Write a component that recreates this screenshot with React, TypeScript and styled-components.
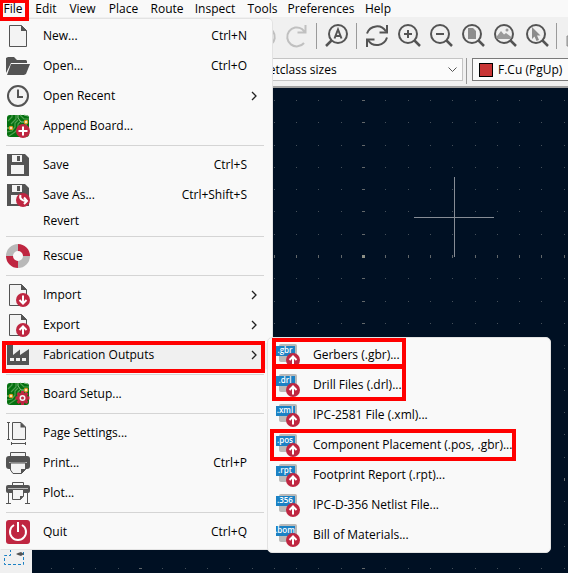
import React from "react";
import styled, { createGlobalStyle } from "styled-components";

const INK = "#545454";
const RED = "#bf2641";
const BLUE = "#1a81c4";
const GREY = "#b9b9b9";
const PAPER = "#f3f3f3";

const GlobalStyle = createGlobalStyle`
  html, body, #root { height: 100%; }
  body { margin: 0; overflow: hidden; }
  *, *::before, *::after { box-sizing: border-box; }
  body, button, select {
    font-family: "Open Sans", "Noto Sans", sans-serif;
    font-size: 12px;
    line-height: 16px;
    color: #000;
  }
  svg { display: block; flex: none; }
`;

const Window = styled.div`
  position: relative;
  display: flex;
  flex-direction: column;
  height: 100vh;
  background: #f0f0f0;
`;

const MenuBar = styled.nav`
  display: flex;
  height: 17px;
  background: #f9f9f9;
`;

const MenuBarItem = styled.button<{ $width: number }>`
  position: relative;
  flex: none;
  width: ${(p) => p.$width}px;
  padding: 0;
  border: 0;
  background: none;
  text-align: center;
  white-space: nowrap;
`;

const Toolbar = styled.div`
  display: flex;
  align-items: center;
  height: 38px;
  padding-left: 249px;
  overflow: hidden;
`;

const ToolButton = styled.button`
  display: flex;
  flex: none;
  align-items: center;
  justify-content: center;
  width: 32px;
  height: 32px;
  padding: 0;
  border: 0;
  background: none;
`;

const ToolSeparator = styled.span`
  flex: none;
  width: 1px;
  height: 26px;
  margin: 0 4px 0 3px;
  background: #9a9a9a;
`;

const OptionsBar = styled.div`
  display: flex;
  align-items: flex-start;
  height: 33px;
  padding: 3px 0 0 195px;
  border-bottom: 2px solid #a0a0a0;
  overflow: hidden;
`;

const SelectBox = styled.label<{ $width: number; $border: string }>`
  display: flex;
  flex: none;
  align-items: center;
  gap: 5px;
  width: ${(p) => p.$width}px;
  height: 23px;
  padding: 0 5px 0 6px;
  border: 1px solid ${(p) => p.$border};
  background: #fbfbfb;
`;

const LayerBox = styled(SelectBox)`
  margin-left: 1px;
`;

const PlainSelect = styled.select`
  flex: 1;
  min-width: 0;
  padding: 0;
  border: 0;
  appearance: none;
  background: none;
`;

const Swatch = styled.span`
  flex: none;
  width: 14px;
  height: 14px;
  border: 1px solid #000;
  background: #c83434;
`;

const Workspace = styled.div`
  display: flex;
  flex: 1;
  min-height: 0;
`;

const SideBar = styled.aside`
  display: flex;
  flex-direction: column;
  justify-content: flex-end;
  flex: none;
  width: 32px;
  padding: 0 4px 3px;
`;

const SideButton = styled.button`
  padding: 0;
  border: 0;
  background: none;
`;

const BoardCanvas = styled.main`
  flex: 1;
  min-width: 0;
  background: #001023;
`;

const Menu = styled.div<{ $left: number; $top: number; $width: number }>`
  position: absolute;
  left: ${(p) => p.$left}px;
  top: ${(p) => p.$top}px;
  width: ${(p) => p.$width}px;
  padding: 2px 0;
  border: 1px solid #e3e3e3;
  border-radius: 5px;
  background: #f9f9f9;
`;

const FlushMenu = styled(Menu)`
  border-left-color: #f9f9f9;
  border-radius: 0 5px 0 0;
`;

const MenuItem = styled.button<{ $short?: boolean; $active?: boolean; $inset: number }>`
  position: relative;
  display: flex;
  align-items: center;
  width: 100%;
  height: ${(p) => (p.$short ? 22 : 30)}px;
  padding: 0 25px 0 ${(p) => p.$inset}px;
  border: 0;
  background: ${(p) => (p.$active ? "linear-gradient(#f0f0f0, #f0f0f0) 5px 3px / calc(100% - 9px) 26px no-repeat" : "none")};
  text-align: left;
  white-space: nowrap;
`;

const IconSlot = styled.span`
  flex: none;
  width: 24px;
  height: 24px;
  margin-right: 13px;
`;

const Label = styled.span`
  flex: 1;
`;

const Arrow = styled.svg`
  margin-right: -10px;
`;

const Divider = styled.hr`
  height: 1px;
  margin: 4px 8px 4px 5px;
  border: 0;
  background: #d5d5d5;
`;

const Marker = styled.span<{ $left: number; $top: number; $width: number; $height: number }>`
  position: absolute;
  z-index: 1;
  left: ${(p) => p.$left}px;
  top: ${(p) => p.$top}px;
  width: ${(p) => p.$width}px;
  height: ${(p) => p.$height}px;
  border: 4px solid #f00;
  pointer-events: none;
`;

const TitleMarker = styled(Marker)`
  border-width: 3px 4px 4px 3px;
`;

const Icon = ({ children }: { children: React.ReactNode }) => (
  <svg width="24" height="24" viewBox="0 0 24 24" fill="none" aria-hidden="true">
    {children}
  </svg>
);

const Badge = ({ d }: { d: string }) => (
  <g transform="translate(17 17)">
    <circle r="7" fill={RED} />
    <path d={d} stroke="#fff" strokeWidth="2" />
  </g>
);

const UP = "M0 4.5V-3M-3.5 0L0-3.6L3.5 0";
const DOWN = "M0-4.5V3M-3.5 0L0 3.6L3.5 0";

const Page = () => (
  <>
    <path d="M3.5 1.5H15.5L20.5 6.5V22.5H3.5Z" fill={PAPER} stroke={INK} />
    <path d="M15 1L21 7H15Z" fill={INK} />
  </>
);

const Board = () => (
  <>
    <rect x="1" y="1" width="22" height="22" rx="3" fill="#04700f" />
    <path d="M6 1V3L2 7M10 1V5L5 10M14 1L18 5H23M1 18L6 17L9 13V9L12 6M3 22L9 18L12 14V10L14 8" stroke="#4f9f50" strokeWidth="1.2" />
    <path d="M12 1V4L15 8H19M1 14H5M20 10V16M22 2L18 1" stroke="#8cc48a" />
    <circle cx="5" cy="14" r="1.6" fill="#fff" stroke="#dd9a23" strokeWidth="1.4" />
    <circle cx="20" cy="8" r="1.6" fill="#fff" stroke="#dd9a23" strokeWidth="1.4" />
  </>
);

const Floppy = () => (
  <>
    <path d="M1 1H19L23 5V23H1Z" fill={INK} />
    <path d="M6 2H16V9H6Z" fill={PAPER} />
    <path d="M11 3H14V8H11Z" fill={INK} />
    <path d="M5 12H18V21H5Z" fill={PAPER} />
  </>
);

const NewIcon = () => <Icon><Page /></Icon>;

const OpenIcon = () => (
  <Icon>
    <path d="M0 19V4L2 3H8L11 6H20L21 7V9H5Z" fill={INK} />
    <path d="M5 10H24L20 20L18 21H1Z" fill={INK} />
  </Icon>
);

const RecentIcon = () => (
  <Icon>
    <circle cx="12" cy="12" r="10" fill={PAPER} stroke={INK} strokeWidth="2" />
    <path d="M12 5.5V13H17" stroke={INK} strokeWidth="2" />
  </Icon>
);

const AppendIcon = () => (
  <Icon>
    <Board />
    <Badge d="M0-4.5V4.5M-4.5 0H4.5" />
  </Icon>
);

const SaveIcon = () => <Icon><Floppy /></Icon>;

const SaveAsIcon = () => (
  <Icon>
    <Floppy />
    <Badge d="M-2.5-5C-4-1 0 1 3.5 1M1-2.5L4 1L1 4" />
  </Icon>
);

const RescueIcon = () => (
  <Icon>
    <path d="M12 0A12 12 0 0 1 24 12H17A5 5 0 0 0 12 7Z" fill={RED} />
    <path d="M24 12A12 12 0 0 1 12 24V17A5 5 0 0 0 17 12Z" fill={GREY} />
    <path d="M12 24A12 12 0 0 1 0 12H7A5 5 0 0 0 12 17Z" fill={RED} />
    <path d="M0 12A12 12 0 0 1 12 0V7A5 5 0 0 0 7 12Z" fill={GREY} />
  </Icon>
);

const ImportIcon = () => <Icon><Page /><Badge d={DOWN} /></Icon>;
const ExportIcon = () => <Icon><Page /><Badge d={UP} /></Icon>;

const FactoryIcon = () => (
  <Icon>
    <path d="M1 1H7V12L14 6.5V12L23 6V22H1Z" fill={INK} />
    <path d="M4 15H8V18H4ZM10 15H14V18H10ZM16 15H20V18H16Z" fill={PAPER} />
  </Icon>
);

const GEAR_TEETH = [0, 45, 90, 135, 180, 225, 270, 315];

const BoardSetupIcon = () => (
  <Icon>
    <Board />
    {GEAR_TEETH.map((angle) => (
      <path key={angle} d="M15 9H18L18.5 13H14.5Z" fill={RED} transform={`rotate(${angle} 16.5 16)`} />
    ))}
    <circle cx="16.5" cy="16" r="4" fill={PAPER} stroke={RED} strokeWidth="2" />
    <circle cx="16.5" cy="16" r="1.5" fill={RED} />
  </Icon>
);

const PageSettingsIcon = () => (
  <Icon>
    <path d="M6.5 1.5H15L19.5 6V18.5H6.5Z" fill={PAPER} stroke={INK} />
    <path d="M14.5 1L20 6.5H14.5Z" fill={INK} />
    <path d="M2.5 1V19M1 1.5H4M1 18.5H4M5 22.5H20M5.5 21V24M19.5 21V24" stroke={INK} />
  </Icon>
);

const PrintIcon = () => (
  <Icon>
    <path d="M4.5 6V1.5H19.5V6" fill={PAPER} stroke={INK} />
    <rect y="5" width="24" height="13" rx="3" fill={INK} />
    <path d="M3 11.5H21" stroke={GREY} />
    <path d="M4.5 12H19.5V18.5L15.5 22.5H7L4.5 19Z" fill={PAPER} stroke={INK} />
    <path d="M15 23V18H20Z" fill={INK} />
  </Icon>
);

const PlotIcon = () => (
  <Icon>
    <path d="M6.5 4V1.5H17.5V4M2.5 10V22M21.5 10V22M0 22.5H5M19 22.5H24" stroke={INK} />
    <rect y="4" width="24" height="8" rx="2" fill={INK} />
    <path d="M2 7.5H22" stroke={GREY} />
    <path d="M6.5 8.5H17.5V15L14.5 18.5H6.5Z" fill={PAPER} stroke={INK} />
    <path d="M14 19V15H18Z" fill={INK} />
  </Icon>
);

const QuitIcon = () => (
  <Icon>
    <rect width="24" height="24" rx="3" fill={RED} />
    <path d="M8 5A8 8 0 1 0 16 5M12 2V12" stroke="#fff" strokeWidth="2" />
  </Icon>
);

const TypeTag = styled.text`
  font: 600 8px "Open Sans", sans-serif;
`;

const FormatIcon = ({ ext }: { ext: string }) => (
  <Icon>
    <rect x="3" y="1" width="18" height="18" rx="2" fill={GREY} />
    <path d="M0 3H19V13H0Z" fill={BLUE} />
    <TypeTag x="9" y="10" textAnchor="middle" fill="#fff">{ext}</TypeTag>
    <Badge d={UP} />
  </Icon>
);

const Lens = ({ children }: { children: React.ReactNode }) => (
  <Icon>
    <circle cx="11" cy="10" r="9" stroke={INK} strokeWidth="2" />
    <path d="M17 16L23 22" stroke={INK} strokeWidth="2.5" />
    {children}
  </Icon>
);

const RedoIcon = () => (
  <Icon>
    <path d="M19 19A9.5 9.5 0 1 1 17 5L20 8M20.5 1V8.5H12.5" stroke="#c0c0c0" strokeWidth="2" />
  </Icon>
);

const UndoIcon = () => (
  <Icon>
    <path d="M5 19A9.5 9.5 0 1 0 7 5L4 8M3.5 1V8.5H11.5" stroke="#c0c0c0" strokeWidth="2" />
  </Icon>
);

const FindIcon = () => (
  <Icon>
    <circle cx="13" cy="10" r="9" stroke={INK} strokeWidth="2" />
    <path d="M7 16L1 22" stroke={INK} strokeWidth="2.5" />
    <path d="M9.5 14.5L13 5.5L16.5 14.5M10.5 12H15.5" stroke={INK} strokeWidth="2" />
  </Icon>
);

const RefreshIcon = () => (
  <Icon>
    <path d="M2 9.5A10.5 10.5 0 0 1 21 7.5M22 13.5A10.5 10.5 0 0 1 3 16" stroke={INK} strokeWidth="2" />
    <path d="M22 1V8.5H14.5M2 23V15.5H9.5" stroke={INK} strokeWidth="2" />
  </Icon>
);

const ZoomInIcon = () => <Lens><path d="M11 6V14M7 10H15" stroke={INK} strokeWidth="2" /></Lens>;
const ZoomOutIcon = () => <Lens><path d="M7 10H15" stroke={INK} strokeWidth="2" /></Lens>;
const ZoomPageIcon = () => <Lens><path d="M7 4H12L15 7V15H7Z" fill="#8c8c8c" /></Lens>;
const ZoomObjectsIcon = () => (
  <Lens>
    <path d="M3 13.5L8 7L11 10.5L13 9L19 13.5L17 15H4Z" fill="#9a9a9a" />
    <circle cx="14" cy="6" r="1.5" fill="#9a9a9a" />
  </Lens>
);
const ZoomSelectionIcon = () => (
  <Lens><path d="M7 3V15L9.5 12.5L11.5 17L14 16L12 11.5H15.5Z" fill="#8c8c8c" /></Lens>
);
const PanelIcon = () => (
  <Icon><path d="M2 12H20V22H2Z" fill={GREY} stroke="#8c8c8c" /></Icon>
);

const SelectionIcon = () => (
  <Icon>
    <path d="M6.5 3V9.5H.5V18.5H19.5V3" stroke={BLUE} strokeDasharray="3 2" />
    <path d="M12 8L14 7L17 6L20 8L17 10L14 9Z" fill={INK} />
  </Icon>
);

const topMenus: [string, number][] = [
  ["File", 26], ["Edit", 40], ["View", 33], ["Place", 49], ["Route", 38],
  ["Inspect", 58], ["Tools", 37], ["Preferences", 80], ["Help", 34],
];

const tools: [string, (() => React.JSX.Element) | null][] = [
  ["Undo", UndoIcon], ["Redo", RedoIcon], ["a", null], ["Find", FindIcon], ["b", null],
  ["Refresh", RefreshIcon], ["Zoom in", ZoomInIcon], ["Zoom out", ZoomOutIcon],
  ["Zoom to page", ZoomPageIcon], ["Zoom to objects", ZoomObjectsIcon],
  ["Zoom to selection", ZoomSelectionIcon], ["c", null], ["Panel", PanelIcon],
];

type Mark = { left: number; top: number; width: number; height: number };
type Entry = {
  label: string;
  icon?: React.ReactNode;
  keys?: string;
  more?: boolean;
  active?: boolean;
  mark?: Mark;
};

const fileGroups: Entry[][] = [
  [
    { label: "New...", icon: <NewIcon />, keys: "Ctrl+N" },
    { label: "Open...", icon: <OpenIcon />, keys: "Ctrl+O" },
    { label: "Open Recent", icon: <RecentIcon />, more: true },
    { label: "Append Board...", icon: <AppendIcon /> },
  ],
  [
    { label: "Save", icon: <SaveIcon />, keys: "Ctrl+S" },
    { label: "Save As...", icon: <SaveAsIcon />, keys: "Ctrl+Shift+S" },
    { label: "Revert" },
  ],
  [{ label: "Rescue", icon: <RescueIcon /> }],
  [
    { label: "Import", icon: <ImportIcon />, more: true },
    { label: "Export", icon: <ExportIcon />, more: true },
    {
      label: "Fabrication Outputs", icon: <FactoryIcon />, more: true, active: true,
      mark: { left: 1, top: 1, width: 263, height: 32 },
    },
  ],
  [{ label: "Board Setup...", icon: <BoardSetupIcon /> }],
  [
    { label: "Page Settings...", icon: <PageSettingsIcon /> },
    { label: "Print...", icon: <PrintIcon />, keys: "Ctrl+P" },
    { label: "Plot...", icon: <PlotIcon /> },
  ],
  [{ label: "Quit", icon: <QuitIcon />, keys: "Ctrl+Q" }],
];

const outputs: Entry[] = [
  { label: "Gerbers (.gbr)...", icon: <FormatIcon ext=".gbr" />, mark: { left: 4, top: -2, width: 134, height: 30 } },
  { label: "Drill Files (.drl)...", icon: <FormatIcon ext=".drl" />, mark: { left: 4, top: -5, width: 134, height: 36 } },
  { label: "IPC-2581 File (.xml)...", icon: <FormatIcon ext=".xml" /> },
  { label: "Component Placement (.pos, .gbr)...", icon: <FormatIcon ext=".pos" />, mark: { left: 2, top: -1, width: 246, height: 32 } },
  { label: "Footprint Report (.rpt)...", icon: <FormatIcon ext=".rpt" /> },
  { label: "IPC-D-356 Netlist File...", icon: <FormatIcon ext=".356" /> },
  { label: "Bill of Materials...", icon: <FormatIcon ext=".bom" /> },
];

const MenuRow = ({ entry, inset }: { entry: Entry; inset: number }) => (
  <MenuItem role="menuitem" $short={!entry.icon} $active={entry.active} $inset={inset}>
    <IconSlot>{entry.icon}</IconSlot>
    <Label>{entry.label}</Label>
    {entry.keys && <span>{entry.keys}</span>}
    {entry.more && (
      <Arrow width="6" height="10" viewBox="0 0 6 10" fill="none" stroke="#222" strokeWidth="1.3">
        <path d="M1 1L5 5L1 9" />
      </Arrow>
    )}
    {entry.mark && (
      <Marker $left={entry.mark.left} $top={entry.mark.top} $width={entry.mark.width} $height={entry.mark.height} />
    )}
  </MenuItem>
);

const PITCH = 22.3;
const ORIGIN = { x: 331, y: 168 };

const Grid = () => {
  const marks: React.JSX.Element[] = [];
  for (let i = -15; i < 60; i++) {
    for (let j = -8; j < 45; j++) {
      const w = i % 10 === 0 ? 3 : 1;
      const h = j % 10 === 0 ? 3 : 1;
      const x = Math.round(ORIGIN.x + i * PITCH) - (w - 1) / 2;
      const y = Math.round(ORIGIN.y + j * PITCH) - (h - 1) / 2;
      marks.push(
        <rect key={`${i}:${j}`} x={x} y={y} width={w} height={h} fill={w * h === 9 ? "#8d9086" : w * h === 3 ? "#62676a" : "#46505a"} />,
      );
    }
  }
  return (
    <svg width="100%" height="100%" shapeRendering="crispEdges" aria-label="Board">
      {marks}
      <path d="M382 129.5H462M422.5 89V169" stroke="#868c95" />
    </svg>
  );
};

export default function App() {
  return (
    <>
      <GlobalStyle />
      <Window>
        <MenuBar>
          {topMenus.map(([name, width]) => (
            <MenuBarItem key={name} $width={width}>
              {name}
              {name === "File" && <TitleMarker $left={0} $top={0} $width={29} $height={21} />}
            </MenuBarItem>
          ))}
        </MenuBar>
        <Toolbar>
          {tools.map(([name, Glyph]) =>
            Glyph ? (
              <ToolButton key={name} aria-label={name}><Glyph /></ToolButton>
            ) : (
              <ToolSeparator key={name} />
            ),
          )}
        </Toolbar>
        <OptionsBar>
          <SelectBox $width={268} $border="#c4c4c4">
            <PlainSelect aria-label="Track width"><option>Track: use netclass sizes</option></PlainSelect>
            <svg width="9" height="6" viewBox="0 0 9 6" fill="none" stroke="#555"><path d="M.5 .5L4.5 4.5L8.5 .5" /></svg>
          </SelectBox>
          <ToolSeparator />
          <LayerBox $width={180} $border="#7a7a7a">
            <Swatch />
            <PlainSelect aria-label="Layer"><option>F.Cu (PgUp)</option></PlainSelect>
          </LayerBox>
        </OptionsBar>
        <Workspace>
          <SideBar>
            <SideButton aria-label="Selection"><SelectionIcon /></SideButton>
          </SideBar>
          <BoardCanvas><Grid /></BoardCanvas>
        </Workspace>
        <FlushMenu role="menu" $left={0} $top={18} $width={273}>
          {fileGroups.map((group, index) => (
            <React.Fragment key={group[0].label}>
              {index > 0 && <Divider />}
              {group.map((entry) => <MenuRow key={entry.label} entry={entry} inset={5} />)}
            </React.Fragment>
          ))}
        </FlushMenu>
        <Menu role="menu" $left={267} $top={337} $width={284}>
          {outputs.map((entry) => <MenuRow key={entry.label} entry={entry} inset={8} />)}
        </Menu>
      </Window>
    </>
  );
}
